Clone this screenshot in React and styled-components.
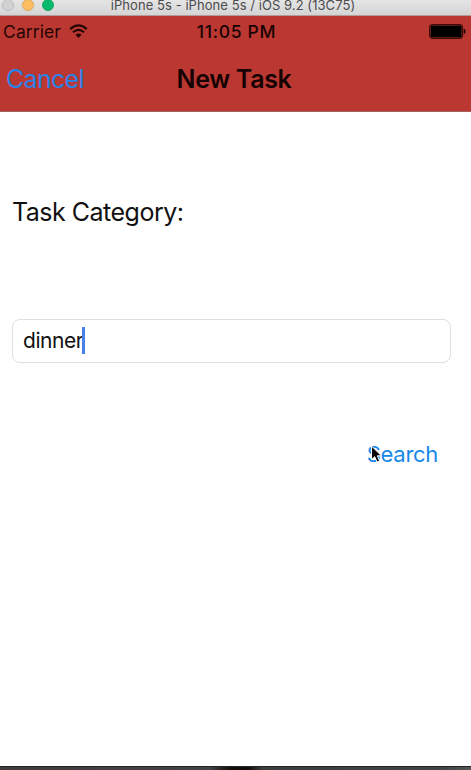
import React from "react";
import styled, { createGlobalStyle } from "styled-components";

const GlobalStyle = createGlobalStyle`
  * { box-sizing: border-box; }
  body { margin: 0; background: #fff; overflow: hidden; }
  button, input { font: inherit; }
`;

const Window = styled.div`
  width: 471px;
  height: 770px;
  display: flex;
  flex-direction: column;
  background: #fff;
  font-family: Inter, "Liberation Sans", sans-serif;
  color: #111;
`;

const TitleBar = styled.header`
  display: grid;
  grid-template-columns: 1fr auto 1fr;
  height: 16px;
  flex: none;
  background: linear-gradient(#e6e5e6, #d5d4d5);
  border-bottom: 1px solid #b49a98;
`;

const Lights = styled.div`
  display: flex;
  gap: 8px;
  margin: -1px 0 0 2px;
`;

const Light = styled.span`
  width: 12px;
  height: 12px;
  border-radius: 50%;
  background: ${(p) => p.$fill};
  border: 1px solid ${(p) => p.$edge};
`;

const WindowTitle = styled.span`
  font-size: 13px;
  line-height: 10px;
  letter-spacing: 0.06px;
  margin: 0 5px 0 0;
  color: #4c4b4d;
  white-space: nowrap;
`;

const TopArea = styled.div`
  flex: none;
  height: 96px;
  background: #bb3832;
  border-bottom: 1px solid #a2625f;
`;

const StatusBar = styled.div`
  display: grid;
  grid-template-columns: 1fr auto 1fr;
  align-items: center;
  height: 31px;
  padding: 0 5px 0 3px;
  color: #250504;
`;

const Carrier = styled.div`
  display: flex;
  align-items: center;
  gap: 8px;
  font-size: 17.5px;
  letter-spacing: 0.1px;
`;

const Clock = styled.span`
  font-size: 17.5px;
  font-weight: 500;
  letter-spacing: 0.7px;
  margin-left: 4px;
  color: #180202;
`;

const BatterySlot = styled.div`
  display: flex;
  justify-content: flex-end;
`;

const NavBar = styled.nav`
  display: grid;
  grid-template-columns: 1fr auto 1fr;
  align-items: center;
  height: 63px;
  padding: 0 9px 0 6px;
`;

const TextButton = styled.button`
  justify-self: start;
  border: 0;
  padding: 0;
  background: none;
  white-space: nowrap;
  font-size: ${(p) => p.$size}px;
  line-height: 30px;
  letter-spacing: ${(p) => p.$track}px;
  color: ${(p) => p.$color};
`;

const NavTitle = styled.h1`
  margin: 0;
  font-size: 25px;
  font-weight: 600;
  line-height: 30px;
  letter-spacing: -0.35px;
  color: #160202;
`;

const Form = styled.main`
  flex: 1;
  display: flex;
  flex-direction: column;
  padding: 85px 20px 0 12px;
`;

const Label = styled.label`
  font-size: 25px;
  line-height: 30px;
  letter-spacing: -0.5px;
`;

const Field = styled.div`
  display: flex;
  align-items: center;
  height: 44px;
  margin-top: 92px;
  padding: 0 10px 1px;
  border: 1px solid #e0e0e0;
  border-radius: 8px;
  font-size: 21px;
  line-height: 26px;
  letter-spacing: -0.45px;
`;

const Caret = styled.span`
  width: 3px;
  height: 27px;
  margin-left: -1px;
  background: #4a7fe8;
`;

const Actions = styled.div`
  position: relative;
  display: flex;
  justify-content: flex-end;
  margin-top: 76px;
  padding-right: 13px;
`;

const Pointer = styled.svg`
  position: absolute;
  right: 68px;
  top: 6px;
`;

const Backdrop = styled.footer`
  flex: none;
  height: 4px;
  border-top: 1px solid #232323;
  background: linear-gradient(90deg, #403c3e 0, #434244 210px, #14100b 230px, #100c0a 248px, #3d3d3e 262px, #434244 440px, #555 471px);
`;

const WifiIcon = () => (
  <svg width="19" height="15" viewBox="0 0 19 15" fill="none" stroke="#250504">
    <path d="M1.2 5.1Q9.5-2.3 17.8 5.1" strokeWidth="2.3" />
    <path d="M4 8.3Q9.5 3.4 15 8.3" strokeWidth="2.1" />
    <path d="M6.5 10.8Q9.5 8.1 12.5 10.8L9.5 13.9Z" fill="#250504" stroke="none" />
  </svg>
);

const BatteryIcon = () => (
  <svg width="37" height="15" viewBox="0 0 37 15">
    <rect x=".6" y=".6" width="33" height="13.8" rx="2.5" fill="none" stroke="#300605" strokeWidth="1" />
    <rect x="1.6" y="1.6" width="31" height="11.8" rx="1" fill="#000" />
    <path d="M34.7 4.8C37.3 5.3 37.3 9.5 34.7 10Z" fill="#200403" />
  </svg>
);

export default function App() {
  return (
    <>
      <GlobalStyle />
      <Window>
        <TitleBar>
          <Lights>
            <Light $fill="#d3d2d3" $edge="#bdbcbd" />
            <Light $fill="#fdbe62" $edge="#dda75a" />
            <Light $fill="#09b96b" $edge="#16a864" />
          </Lights>
          <WindowTitle>iPhone 5s - iPhone 5s / iOS 9.2 (13C75)</WindowTitle>
        </TitleBar>
        <TopArea>
          <StatusBar>
            <Carrier>Carrier <WifiIcon /></Carrier>
            <Clock>11:05 PM</Clock>
            <BatterySlot><BatteryIcon /></BatterySlot>
          </StatusBar>
          <NavBar>
            <TextButton $size={25} $track={-0.7} $color="#2b82e6">Cancel</TextButton>
            <NavTitle>New Task</NavTitle>
          </NavBar>
        </TopArea>
        <Form>
          <Label>Task Category:</Label>
          <Field>dinner<Caret /></Field>
          <Actions>
            <TextButton $size={22} $track={-0.3} $color="#1888e8">Search</TextButton>
            <Pointer width="13" height="19" viewBox="0 0 13 19">
              <path d="M1.5 1V14.6L4.7 11.7L7 17L9.6 15.9L7.3 10.8H11.5Z" fill="#080808" stroke="#fff" strokeWidth="1" />
            </Pointer>
          </Actions>
        </Form>
        <Backdrop />
      </Window>
    </>
  );
}
